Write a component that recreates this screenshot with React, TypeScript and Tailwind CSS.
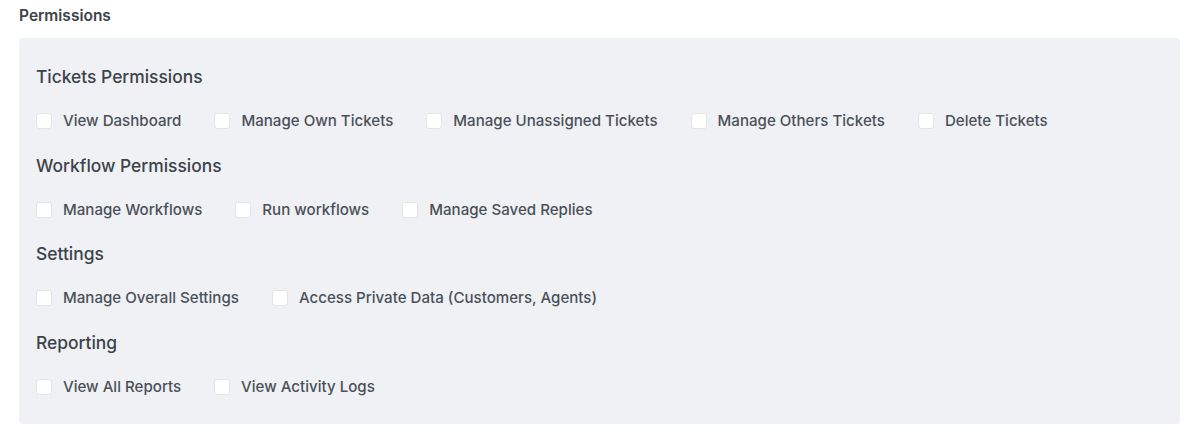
import React from "react";

const sections: { title: string; items: string[] }[] = [
  {
    title: "Tickets Permissions",
    items: [
      "View Dashboard",
      "Manage Own Tickets",
      "Manage Unassigned Tickets",
      "Manage Others Tickets",
      "Delete Tickets",
    ],
  },
  {
    title: "Workflow Permissions",
    items: ["Manage Workflows", "Run workflows", "Manage Saved Replies"],
  },
  {
    title: "Settings",
    items: ["Manage Overall Settings", "Access Private Data (Customers, Agents)"],
  },
  {
    title: "Reporting",
    items: ["View All Reports", "View Activity Logs"],
  },
];

export default function App() {
  return (
    <div
      className="w-[1200px] h-[448px] bg-white pl-[19px] pr-[20px] pt-[6px]"
      style={{ fontFamily: "Inter, 'Noto Sans', sans-serif" }}
    >
      <div className="text-[15.5px] leading-[20px] font-semibold text-[#3c434a]">Permissions</div>
      <div className="mt-[12px] bg-[#f0f1f5] rounded-[4px] pl-[17px] pr-4 pt-[27px] pb-[27px] flex flex-col gap-[22.3px]">
        {sections.map((s) => (
          <React.Fragment key={s.title}>
            <div className="text-[17.4px] leading-[24px] font-medium text-[#3c434a]">{s.title}</div>
            <div className="flex items-center gap-[33px] h-[20px]">
              {s.items.map((it) => (
                <label key={it} className="flex items-center gap-[11px] h-[20px]">
                  <span className="w-[16px] h-[16px] bg-white border border-[#e3e5ea] rounded-[3px]" />
                  <span className="text-[15.1px] leading-[20px] font-[450] text-[#4a5058]">{it}</span>
                </label>
              ))}
            </div>
          </React.Fragment>
        ))}
      </div>
    </div>
  );
}
